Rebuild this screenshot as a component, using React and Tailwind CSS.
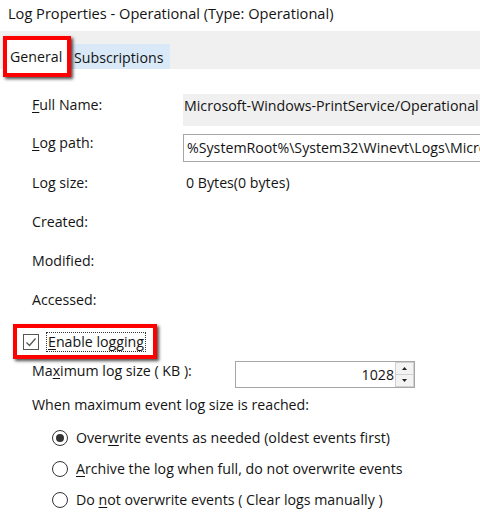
import React from "react";

const Mn = ({ children }) => <span className="underline underline-offset-2">{children}</span>;

const Radio = ({ checked, children }) => (
  <div className="flex h-[31px] items-center">
    <span className="flex h-[16px] w-[16px] items-center justify-center rounded-full border border-[#333333] bg-white">
      {checked && <span className="h-[8px] w-[8px] rounded-full bg-[#333333]" />}
    </span>
    <span className="ml-[8px]">{children}</span>
  </div>
);

const App = () => {
  return (
    <div
      className="h-[517px] w-[480px] overflow-hidden bg-white text-[14.2px] leading-[20px] text-[#141414]"
      style={{ fontFamily: '"Open Sans", "Noto Sans", sans-serif' }}
    >
      {/* Title */}
      <div className="flex h-[31px] items-center pl-[8px] pb-[6px] text-[14.6px]">Log Properties - Operational (Type: Operational)</div>

      {/* Tabs */}
      <div className="flex h-[38px] items-end bg-[#f0f0f0] pl-[3px]">
        <div className="relative z-10 -mb-[8px] flex h-[41px] w-[68px] items-start border-4 border-[#ff0000] bg-white pt-[7px] pl-[3px] shadow-[2px_2px_3px_rgba(0,0,0,0.7)]">
          General
        </div>
        <div className="flex h-[25px] w-[99px] items-center bg-[#d9e9f8] pl-[3px] pt-[2px]">Subscriptions</div>
      </div>

      {/* Fields */}
      <div className="pt-[16px] pl-[32px]">
        <div className="flex h-[39px] items-start">
          <div className="w-[151px] shrink-0 pt-[10px]">
            <Mn>F</Mn>ull Name:
          </div>
          <div className="mt-[9px] h-[32px] min-w-0 flex-1 overflow-hidden whitespace-nowrap bg-[#f0f0f0] pl-[1px] pt-[2px]">
            Microsoft-Windows-PrintService/Operational
          </div>
        </div>
        <div className="flex h-[39px] items-start">
          <div className="w-[151px] shrink-0 pt-[9px]">
            <Mn>L</Mn>og path:
          </div>
          <div className="mt-[10px] flex h-[28px] min-w-0 flex-1 items-center overflow-hidden whitespace-nowrap border border-[#a6a6a6] border-r-0 pl-[3px]">
            %SystemRoot%\System32\Winevt\Logs\Microsoft-Windows-PrintService%4Operational.evtx
          </div>
        </div>
        <div className="flex h-[39px] items-center">
          <div className="w-[151px] shrink-0">Log size:</div>
          <div className="pl-[3px]">0 Bytes(0 bytes)</div>
        </div>
        <div className="flex h-[39px] items-center">Created:</div>
        <div className="flex h-[39px] items-center">Modified:</div>
        <div className="flex h-[39px] items-center">Accessed:</div>
      </div>

      {/* Enable logging */}
      <div className="pl-[13px] pt-[5px]">
        <div className="flex h-[35px] w-[144px] items-center border-4 border-[#ff0000] bg-white pl-[6px] shadow-[2px_2px_3px_rgba(0,0,0,0.7)]">
          <span className="flex h-[16px] w-[16px] items-center justify-center border border-[#555555] bg-white">
            <svg width="12" height="12" viewBox="0 0 12 12">
              <path d="M1.5 6.5 L4.5 9.5 L10.5 2.5" fill="none" stroke="#555555" strokeWidth="1.3" />
            </svg>
          </span>
          <span className="ml-[7px] border border-dotted border-[#333333] px-[1px] leading-[18px]">
            <Mn>E</Mn>nable logging
          </span>
        </div>
      </div>

      {/* Max size */}
      <div className="flex items-start pl-[32px] pt-[2px]">
        <div className="w-[203px] shrink-0">
          Ma<Mn>x</Mn>imum log size ( KB ):
        </div>
        <div className="flex h-[27px] w-[180px] border border-[#a6a6a6] bg-white">
          <div className="flex-1 pr-[1px] pt-[3px] text-right">1028</div>
          <div className="flex w-[19px] flex-col">
            <div className="flex flex-1 items-center justify-center border border-[#d0d0d0] bg-[#f3f3f3]">
              <svg width="5" height="3" viewBox="0 0 5 3"><path d="M0 3 L2.5 0 L5 3 Z" fill="#222" /></svg>
            </div>
            <div className="flex flex-1 items-center justify-center border border-t-0 border-[#d0d0d0] bg-[#f3f3f3]">
              <svg width="5" height="3" viewBox="0 0 5 3"><path d="M0 0 L2.5 3 L5 0 Z" fill="#222" /></svg>
            </div>
          </div>
        </div>
      </div>

      <div className="pl-[32px] pt-[7px]">When maximum event log size is reached:</div>

      {/* Radios */}
      <div className="pl-[52px] pt-[7px]">
        <Radio checked>
          Over<Mn>w</Mn>rite events as needed (oldest events first)
        </Radio>
        <Radio>
          <Mn>A</Mn>rchive the log when full, do not overwrite events
        </Radio>
        <Radio>
          Do <Mn>n</Mn>ot overwrite events ( Clear logs manually )
        </Radio>
      </div>
    </div>
  );
};

export default App;
